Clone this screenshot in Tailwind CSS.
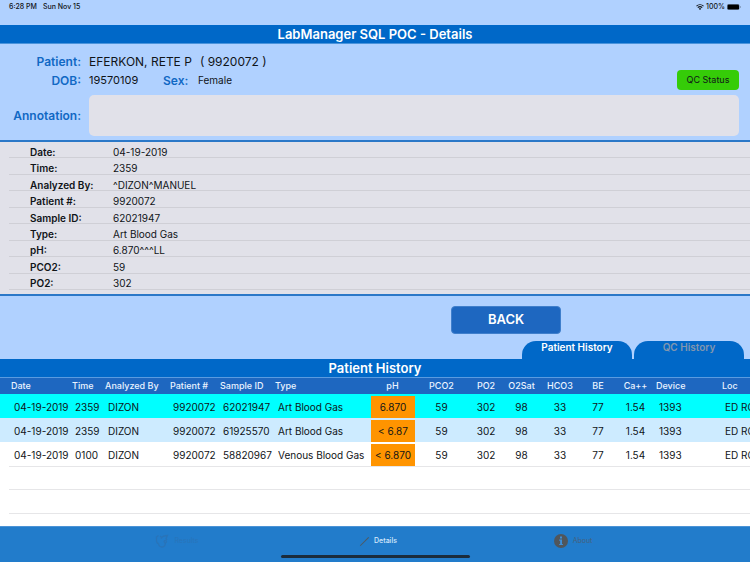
<!DOCTYPE html>
<html lang="en">
<head>
<meta charset="utf-8">
<meta name="viewport" content="width=device-width, initial-scale=1">
<title>LabManager SQL POC - Details</title>
<script src="https://cdn.jsdelivr.net/npm/@tailwindcss/browser@4"></script>
</head>
<body class="flex min-h-screen flex-col overflow-x-hidden bg-[#b0d1ff] font-[Inter,'Liberation_Sans',sans-serif] text-[#101418]">
  <div class="flex h-[25px] items-start justify-between pt-px pr-[9px] pl-[9px] text-[7px] leading-3 font-medium">
    <div class="flex gap-[6px]"><span>6:28 PM</span><span>Sun Nov 15</span></div>
    <div class="flex items-center gap-[2px]">
      <svg class="h-[6px] w-[8px]" viewBox="0 0 16 12" fill="none" stroke="#101418" stroke-width="2.2" aria-hidden="true"><path d="M1 4.2C5 .4 11 .4 15 4.2M3.6 7.2c2.600-2.300 6.200-2.300 8.800 0"/><path d="M8 12 5.500 9.300c1.400-1.200 3.600-1.200 5 0z" fill="#101418" stroke="none"/></svg>
      <span>100%</span>
      <svg class="h-[6px] w-[14px]" viewBox="0 0 28 12" aria-hidden="true"><rect x=".5" y=".5" width="24" height="11" rx="3" fill="none" stroke="#56657c"/><rect x="1" y="1" width="23" height="10" rx="2.500" fill="#000"/><path d="M26 4c1.800.6 1.800 3.400 0 4z" fill="#56657c"/></svg>
    </div>
  </div>

  <h1 class="h-[19px] border-b border-[#4a94dc] bg-[#0068c8] text-center text-[13px] leading-[19px] font-semibold text-white">LabManager SQL POC - Details</h1>

  <section class="h-[98px] border-b-2 border-[#2b78c8] pt-2 pr-[11px]">
    <div class="flex items-end justify-between">
      <div class="grid grid-cols-[81px_1fr] gap-x-2 text-[12px] leading-[19px]">
        <span class="text-right font-semibold text-[#1068c4]">Patient:</span>
        <span class="flex gap-2"><span>EFERKON, RETE P</span><span>( 9920072 )</span></span>
        <span class="text-right font-semibold text-[#1068c4]">DOB:</span>
        <span class="flex text-[11px]"><span class="w-[74px]">19570109</span><span class="w-[35px] text-[12px] font-semibold text-[#1068c4]">Sex:</span><span class="text-[10px]">Female</span></span>
      </div>
      <button class="h-5 w-[62px] rounded-[4px] bg-[#35cc08] text-[9px] leading-5">QC Status</button>
    </div>
    <div class="mt-[5px] flex items-center gap-2">
      <label for="annotation" class="w-[81px] text-right text-[12px] font-semibold text-[#1068c4]">Annotation:</label>
      <textarea id="annotation" class="h-[41px] flex-1 resize-none rounded-[5px] bg-[#e1e1e9] p-1 text-[10px] outline-none"></textarea>
    </div>
  </section>

  <section class="border-b-2 border-[#2b78c8] bg-[#e1e1e9] pb-1 pl-[9px] text-[10px] leading-3">
    <dl class="grid h-[148px] auto-rows-fr">
      <div class="flex items-center border-b border-[#cfcfd6] pt-1 pl-[21px]"><dt class="w-[83px] font-semibold">Date:</dt><dd>04-19-2019</dd></div>
      <div class="flex items-center border-b border-[#cfcfd6] pt-1 pl-[21px]"><dt class="w-[83px] font-semibold">Time:</dt><dd>2359</dd></div>
      <div class="flex items-center border-b border-[#cfcfd6] pt-1 pl-[21px]"><dt class="w-[83px] font-semibold">Analyzed By:</dt><dd>^DIZON^MANUEL</dd></div>
      <div class="flex items-center border-b border-[#cfcfd6] pt-1 pl-[21px]"><dt class="w-[83px] font-semibold">Patient #:</dt><dd>9920072</dd></div>
      <div class="flex items-center border-b border-[#cfcfd6] pt-1 pl-[21px]"><dt class="w-[83px] font-semibold">Sample ID:</dt><dd>62021947</dd></div>
      <div class="flex items-center border-b border-[#cfcfd6] pt-1 pl-[21px]"><dt class="w-[83px] font-semibold">Type:</dt><dd>Art Blood Gas</dd></div>
      <div class="flex items-center border-b border-[#cfcfd6] pt-1 pl-[21px]"><dt class="w-[83px] font-semibold">pH:</dt><dd>6.870^^^LL</dd></div>
      <div class="flex items-center border-b border-[#cfcfd6] pt-1 pl-[21px]"><dt class="w-[83px] font-semibold">PCO2:</dt><dd>59</dd></div>
      <div class="flex items-center border-b border-[#cfcfd6] pt-1 pl-[21px]"><dt class="w-[83px] font-semibold">PO2:</dt><dd>302</dd></div>
    </dl>
  </section>

  <div class="flex flex-col items-end pt-[10px] pr-[6px]">
    <button class="mr-[183px] h-[28px] w-[110px] rounded-[4px] border border-[#3f7fcc] bg-[#1e67c0] text-[13px] font-semibold text-white">BACK</button>
    <div class="mt-[7px] flex gap-[2px] text-[10px] leading-3">
      <button class="flex h-[18px] w-[110px] justify-center rounded-t-[14px] bg-[#0068c8] font-semibold text-white">Patient History</button>
      <button class="flex h-[18px] w-[110px] justify-center rounded-t-[14px] bg-[#0068c8] font-semibold text-[#8296ae]">QC History</button>
    </div>
  </div>

  <main class="flex flex-1 flex-col bg-white">
    <h2 class="h-[19px] border-b border-[#5a9be0] bg-[#0068c8] text-center text-[13px] leading-[19px] font-semibold text-white">Patient History</h2>
    <div class="overflow-hidden">
      <table class="w-full table-fixed border-collapse text-left text-[10px] whitespace-nowrap">
        <colgroup>
          <col class="w-[72px]"><col class="w-[33px]"><col class="w-[65px]"><col class="w-[50px]"><col class="w-[55px]"><col class="w-[95px]"><col class="w-[45px]"><col class="w-[53px]"><col class="w-[36px]"><col class="w-[35px]"><col class="w-[42px]"><col class="w-[34px]"><col class="w-[41px]"><col class="w-[66px]"><col>
        </colgroup>
        <thead class="bg-[#1e67c0] text-[9px] leading-4 text-[#eaf3ff]">
          <tr class="h-4 *:p-0 *:font-medium">
            <th><span class="pl-[11px]">Date</span></th><th>Time</th><th>Analyzed By</th><th>Patient #</th><th>Sample ID</th><th>Type</th>
            <th class="text-center">pH</th><th class="text-center">PCO2</th><th class="text-center">PO2</th><th class="text-center">O2Sat</th><th class="text-center">HCO3</th><th class="text-center">BE</th><th class="text-center">Ca++</th><th>Device</th><th>Loc</th>
          </tr>
        </thead>
        <tbody class="leading-[22px]">
          <tr class="h-6 bg-[#00ffff] *:p-0 *:pt-[2px]">
            <td><span class="pl-[14px]">04-19-2019</span></td><td><span class="pl-[3px]">2359</span></td><td><span class="pl-[3px]">DIZON</span></td><td><span class="pl-[3px]">9920072</span></td><td><span class="pl-[3px]">62021947</span></td><td><span class="pl-[3px]">Art Blood Gas</span></td>
            <td class="text-center"><div class="ml-px bg-[#ff9400]">6.870</div></td><td class="text-center">59</td><td class="text-center">302</td><td class="text-center">98</td><td class="text-center">33</td><td class="text-center">77</td><td class="text-center">1.54</td><td><span class="pl-[3px]">1393</span></td><td><span class="pl-[3px]">ED RO</span></td>
          </tr>
          <tr class="h-6 bg-[#cdebff] *:p-0 *:pt-[2px]">
            <td><span class="pl-[14px]">04-19-2019</span></td><td><span class="pl-[3px]">2359</span></td><td><span class="pl-[3px]">DIZON</span></td><td><span class="pl-[3px]">9920072</span></td><td><span class="pl-[3px]">61925570</span></td><td><span class="pl-[3px]">Art Blood Gas</span></td>
            <td class="text-center"><div class="ml-px bg-[#ff9400]">&lt; 6.87</div></td><td class="text-center">59</td><td class="text-center">302</td><td class="text-center">98</td><td class="text-center">33</td><td class="text-center">77</td><td class="text-center">1.54</td><td><span class="pl-[3px]">1393</span></td><td><span class="pl-[3px]">ED RO</span></td>
          </tr>
          <tr class="h-6 *:p-0 *:pt-[2px]">
            <td><span class="pl-[14px]">04-19-2019</span></td><td><span class="pl-[3px]">0100</span></td><td><span class="pl-[3px]">DIZON</span></td><td><span class="pl-[3px]">9920072</span></td><td><span class="pl-[3px]">58820967</span></td><td><span class="pl-[3px]">Venous Blood Gas</span></td>
            <td class="text-center"><div class="ml-px bg-[#ff9400]">&lt; 6.870</div></td><td class="text-center">59</td><td class="text-center">302</td><td class="text-center">98</td><td class="text-center">33</td><td class="text-center">77</td><td class="text-center">1.54</td><td><span class="pl-[3px]">1393</span></td><td><span class="pl-[3px]">ED RO</span></td>
          </tr>
        </tbody>
      </table>
    </div>
    <div class="ml-[9px] h-6 border-y border-[#e6e6e8]"></div>
    <div class="ml-[9px] h-6 border-b border-[#e6e6e8]"></div>
  </main>

  <nav class="flex h-9 flex-col items-center border-t border-[#4b93d6] bg-[#227ccb] text-[7px]">
    <div class="grid w-[594px] max-w-full flex-1 grid-cols-3 items-center">
      <a href="#results" class="flex items-center justify-center gap-[5px] text-[#2974b9]">
        <svg class="size-[14px]" viewBox="0 0 14 14" fill="none" stroke="#2974b9" stroke-width="1.300" aria-hidden="true"><path d="M3.500 1.500 1.500 3v3.500c0 2 1 3 2.200 3.200M5 2l1.500 1.200M3.500 9.500c.2 2.200 1.600 3.500 3.500 3.500 2.600 0 3.500-2.300 3.300-4.500M6 4.500C7 2.500 9 1.500 12.500 1.500L11 4.500 12 6"/><circle cx="10.300" cy="7.500" r="1.200"/></svg>
        <span>Results</span>
      </a>
      <a href="#details" aria-current="page" class="flex items-center justify-center gap-[4px] pl-[6px] font-medium text-[#d5e8fb]">
        <svg class="size-[11px]" viewBox="0 0 11 11" aria-hidden="true"><path d="M.8 10.200 1.400 8.900 9.300 1l.8.8-8 7.800z" fill="#4d5a63"/></svg>
        <span>Details</span>
      </a>
      <a href="#about" class="flex items-center justify-center gap-[5px] text-[#45617c]">
        <svg class="size-[14px]" viewBox="0 0 14 14" aria-hidden="true"><circle cx="7" cy="7" r="7" fill="#50565c"/><path d="M6 2.500h2v1.900H6zM5.200 5.600H8v4.300h.9V11H5.200V9.900h.9V6.700h-.9z" fill="#3f8fd8"/></svg>
        <span>About</span>
      </a>
    </div>
    <div class="mb-[4px] h-[3px] w-[189px] rounded-full bg-[#1b2c3c]"></div>
  </nav>
</body>
</html>
